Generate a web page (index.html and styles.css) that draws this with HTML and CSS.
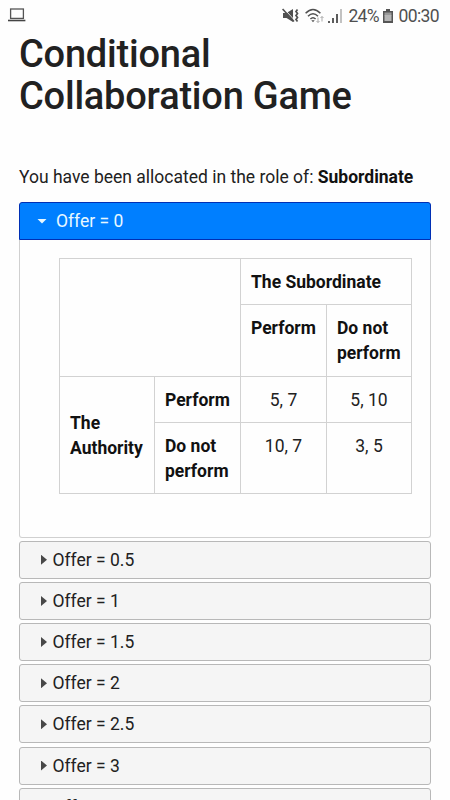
FILE: index.html
```html
<!DOCTYPE html>
<html lang="en">
<head>
<meta charset="utf-8">
<meta name="viewport" content="width=device-width, initial-scale=1">
<title>Conditional Collaboration Game</title>
<link rel="stylesheet" href="styles.css">
</head>
<body>
<header class="status">
  <svg class="laptop" width="18" height="14" viewBox="0 0 18 14"><rect x="2.600" y="1" width="12.800" height="9.400" fill="none" stroke="#555" stroke-width="1.300"/><path d="M0 12.500h17.400" stroke="#444" stroke-width="1.600"/></svg>
  <div class="indicators">
    <svg class="mute" width="17" height="16" viewBox="0 0 17 16"><path d="M1 5h3.500l6.500-4v13l-6.500-4H1z" fill="#505050"/><path d="M1.700 .5l11 12" stroke="#fefefe" stroke-width="1"/><path d="M.6 1l11.400 12.500" stroke="#505050" stroke-width="1.600"/><path d="M15.500 1.500l-1.500 2 1.500 2-1.500 2 1.500 2-1.500 2 1.500 2" fill="none" stroke="#505050" stroke-width="1.700"/></svg>
    <svg class="wifi" width="20" height="16" viewBox="0 0 20 16"><g fill="none" stroke="#505050" stroke-width="1.500"><path d="M.6 5.200q7.400-7.600 14.800 0"/><path d="M3 8.200q5-5 10 0"/><path d="M5.400 11q2.600-2.600 5.200 0"/></g><path d="M6.300 12.200h3.400L8 14.200z" fill="#505050"/><path d="M13 9.500v5m-1.500-1.500L13 14.500l1.500-1.500M17 13.500v-5m-1.500 1.500L17 8.500l1.500 1.500" fill="none" stroke="#aaa" stroke-width="1"/></svg>
    <svg class="signal" width="15" height="16" viewBox="0 0 15 16"><path d="M0 13h2v2H0zM4 10h2v5H4zM8 6h2v9H8z" fill="#5d5d5d"/><path d="M12 1h2v14h-2z" fill="#c2c2c2"/></svg>
    <span class="percent">24%</span>
    <svg class="battery" width="10" height="14" viewBox="0 0 10 14"><path d="M3 0h4v2h3v12H0V2h3z" fill="#555"/><path d="M1.500 3.500h7v3h-7z" fill="#999"/><path d="M1.500 6h7v6h-7z" fill="#b5b5b5"/></svg>
    <span class="clock">00:30</span>
  </div>
</header>
<main>
  <h1>Conditional<br>Collaboration Game</h1>
  <p class="role">You have been allocated in the role of: <strong>Subordinate</strong></p>
  <section class="accordion">
    <div class="tab active"><i class="down"></i><span>Offer = 0</span></div>
    <div class="panel">
      <table>
        <colgroup><col class="c1"><col class="c2"><col class="c3"><col class="c4"></colgroup>
        <tr class="short"><td colspan="2" rowspan="2"></td><th colspan="2">The Subordinate</th></tr>
        <tr class="tall"><th>Perform</th><th>Do not<br>perform</th></tr>
        <tr class="short"><th rowspan="2" class="middle">The<br>Authority</th><th>Perform</th><td>5, 7</td><td>5, 10</td></tr>
        <tr class="last"><th>Do not<br>perform</th><td>10, 7</td><td>3, 5</td></tr>
      </table>
    </div>
    <div class="tab"><i class="right"></i><span>Offer = 0.5</span></div>
    <div class="tab"><i class="right"></i><span>Offer = 1</span></div>
    <div class="tab"><i class="right"></i><span>Offer = 1.5</span></div>
    <div class="tab"><i class="right"></i><span>Offer = 2</span></div>
    <div class="tab"><i class="right"></i><span>Offer = 2.5</span></div>
    <div class="tab"><i class="right"></i><span>Offer = 3</span></div>
    <div class="tab"><i class="right"></i><span>Offer = 3.5</span></div>
  </section>
</main>
</body>
</html>
```
FILE: styles.css
```css
* { box-sizing: border-box; }
body {
  margin: 0;
  height: 800px;
  overflow: hidden;
  background: #fefefe;
  color: #212121;
  font: 17.5px/25px Roboto, sans-serif;
}
.status {
  height: 34px;
  padding: 0 11px 2px 8px;
  display: flex;
  align-items: center;
  justify-content: space-between;
  color: #505050;
}
.laptop { margin-top: -2px; }
.indicators { display: flex; align-items: center; }
.wifi { margin-left: 6px; margin-top: -1px; }
.signal { margin-left: 3px; margin-top: -1px; }
.percent { margin-left: 5px; width: 30px; white-space: nowrap; font-size: 17.5px; letter-spacing: -.7px; }
.battery { margin-left: 5px; }
.clock { margin-left: 5px; font-size: 17.5px; letter-spacing: -.6px; }
main { padding: 0 19px; }
h1 {
  margin: 0;
  font-size: 38px;
  line-height: 41.5px;
  font-weight: 500;
  letter-spacing: -.22px;
  white-space: nowrap;
}
.role { margin: 48px 0 12px; white-space: nowrap; }
strong, th { font-weight: 700; color: #111; }
.tab {
  height: 38px;
  margin-bottom: 3.15px;
  padding-left: 21px;
  display: flex;
  align-items: center;
  border: 1px solid #b8b8b8;
  border-radius: 3px;
  background: #f5f5f5;
}
.tab span { margin-top: 1px; }
.right {
  width: 6px;
  height: 10px;
  margin-right: 5.5px;
  background: #484848;
  clip-path: polygon(0 0, 100% 50%, 0 100%);
}
.active {
  margin: 0;
  padding-left: 17px;
  border-color: #002fb4;
  border-radius: 3px 3px 0 0;
  background: #007fff;
  color: #e8f8ff;
}
.down {
  width: 10px;
  height: 5px;
  margin-right: 9px;
  background: #e8f8ff;
  clip-path: polygon(0 0, 100% 0, 50% 100%);
}
.panel {
  height: 297.500px;
  margin-bottom: 3.300px;
  padding: 18px 0 0 39px;
  border: 1px solid #d0d0d0;
  border-top: 0;
  border-radius: 0 0 3px 3px;
}
table { width: 353px; table-layout: fixed; border-collapse: collapse; }
.c1 { width: 95px; }
.c2 { width: 86px; }
.c3 { width: 86px; }
.c4 { width: 85px; }
th, td { border: 1px solid #d2d2d2; padding: 11px 10px 9px; vertical-align: top; text-align: left; white-space: nowrap; }
th { padding-right: 0; }
td { padding: 11px 0 9px; text-align: center; }
.middle { vertical-align: middle; }
.short { height: 46px; }
.tall { height: 72px; }
.last { height: 71px; }
```
